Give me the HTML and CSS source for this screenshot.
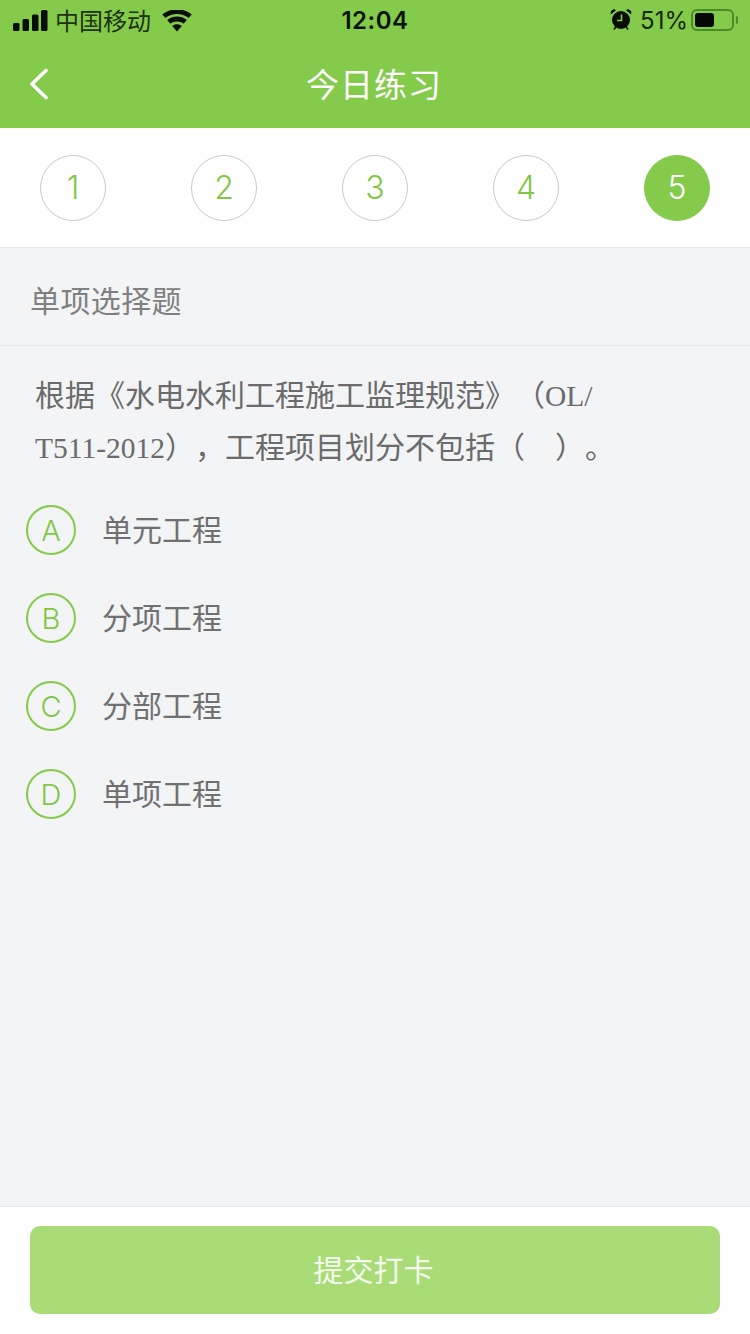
FILE: index.html
```html
<!DOCTYPE html>
<html lang="zh-CN">
<head>
    <meta charset="UTF-8">
    <meta name="viewport" content="width=device-width, initial-scale=1.0">
    <title>今日练习</title>
    <link rel="stylesheet" href="styles.css">
</head>
<body>
    <header class="top">
        <div class="status-bar">
            <div class="status-left">
                <svg class="signal" width="35" height="21" viewBox="0 0 35 21">
                    <rect x="0" y="13" width="6.500" height="8" rx="1.500"/>
                    <rect x="9.500" y="9" width="6.500" height="12" rx="1.500"/>
                    <rect x="19" y="4.500" width="6.500" height="16.500" rx="1.500"/>
                    <rect x="28" y="0" width="6.500" height="21" rx="1.500"/>
                </svg>
                <span class="carrier">中国移动</span>
                <svg class="wifi" width="30" height="22" viewBox="0 0 30 22">
                    <path d="M15 21.500l-4.800-5.600c2.800-2.200 6.800-2.200 9.600 0z"/>
                    <path d="M8.300 13.700L5.200 10c5.600-4.600 14-4.600 19.600 0l-3.100 3.700c-3.800-3-9.600-3-13.400 0z"/>
                    <path d="M3.400 8L.3 4.400C8.600-2.400 21.400-2.400 29.700 4.400L26.600 8C19.900 2.600 10.100 2.600 3.400 8z"/>
                </svg>
            </div>
            <div class="clock">12:04</div>
            <div class="status-right">
                <svg class="alarm" width="22" height="22" viewBox="0 0 22 22">
                    <circle cx="11" cy="12" r="9"/>
                    <path d="M.8 6.500L6 2.300 3.800 1 .8 3.300zM21.200 6.500L16 2.300 18.200 1 21.200 3.300z"/>
                    <path d="M4 21.500l2-3M18 21.500l-2-3" class="alarm-feet"/>
                    <path d="M11.500 6.500v6H7" class="alarm-hands"/>
                </svg>
                <span class="battery-text">51%</span>
                <div class="battery">
                    <div class="battery-level"></div>
                </div>
                <div class="battery-tip"></div>
            </div>
        </div>
        <div class="nav-bar">
            <svg class="back" width="20" height="32" viewBox="0 0 20 32">
                <path d="M17 2.500L3 16l14 13.500"/>
            </svg>
            <h1 class="nav-title">今日练习</h1>
        </div>
    </header>

    <div class="steps">
        <div class="step">1</div>
        <div class="step">2</div>
        <div class="step">3</div>
        <div class="step">4</div>
        <div class="step step-active">5</div>
    </div>

    <main class="content">
        <div class="section-title">单项选择题</div>
        <p class="question">根据《水电水利工程施工监理规范》（<span class="latin">OL/</span><br><span class="latin">T511-2012</span>），工程项目划分不包括（&nbsp;&nbsp;&nbsp;&nbsp;）。</p>
        <ul class="options">
            <li class="option"><span class="option-key">A</span><span class="option-text">单元工程</span></li>
            <li class="option"><span class="option-key">B</span><span class="option-text">分项工程</span></li>
            <li class="option"><span class="option-key">C</span><span class="option-text">分部工程</span></li>
            <li class="option"><span class="option-key">D</span><span class="option-text">单项工程</span></li>
        </ul>
    </main>

    <footer class="bottom">
        <button class="submit-button" type="button">提交打卡</button>
    </footer>
</body>
</html>
```

FILE: styles.css
```css
* {
    margin: 0;
    padding: 0;
    box-sizing: border-box;
}

html, body {
    height: 1334px;
    overflow: hidden;
}

body {
    display: flex;
    flex-direction: column;
    background-color: #f2f4f6;
    font-family: "Liberation Sans", "Noto Sans CJK SC", sans-serif;
}

/* top green area */
.top {
    height: 128px;
    background-color: #85cb4b;
    flex-shrink: 0;
}

.status-bar {
    height: 40px;
    display: flex;
    align-items: center;
    justify-content: space-between;
    padding: 0 13px;
    position: relative;
}

.status-left {
    display: flex;
    align-items: center;
}

.signal {
    fill: #0a0f06;
}

.carrier {
    font-size: 24px;
    margin-left: 7px;
    margin-top: -2px;
    color: #1c3210;
}

.wifi {
    fill: #0a0f06;
    margin-left: 11px;
    margin-top: 1px;
}

.clock {
    position: absolute;
    left: 0;
    right: 0;
    text-align: center;
    font-family: Inter, "Liberation Sans", sans-serif;
    font-size: 24px;
    font-weight: 600;
    letter-spacing: 0.5px;
    color: #0a1204;
}

.status-right {
    display: flex;
    align-items: center;
    margin-right: -1px;
}

.alarm {
    fill: #0a0f06;
    margin-right: 8px;
    margin-top: -2px;
}

.alarm-feet {
    stroke: #0a0f06;
    stroke-width: 1.500;
    fill: none;
}

.alarm-hands {
    stroke: #85cb4b;
    stroke-width: 1.600;
    fill: none;
}

.battery-text {
    font-family: Inter, "Liberation Sans", sans-serif;
    font-size: 24px;
    color: #14280a;
    margin-right: 3px;
}

.battery {
    width: 43px;
    height: 22px;
    border: 2px solid #4d8a28;
    border-radius: 6px;
    padding: 2px;
}

.battery-level {
    width: 19px;
    height: 100%;
    background-color: #050805;
    border-radius: 3px;
}

.battery-tip {
    width: 2px;
    height: 8px;
    margin-left: 2px;
    background-color: #4d8a28;
    border-radius: 0 2px 2px 0;
}

.nav-bar {
    height: 88px;
    position: relative;
    display: flex;
    align-items: center;
    justify-content: center;
}

.back {
    position: absolute;
    left: 29px;
    top: 28px;
    fill: none;
    stroke: #ffffff;
    stroke-width: 3.600;
    stroke-linecap: round;
    stroke-linejoin: round;
}

.nav-title {
    font-size: 33px;
    font-weight: normal;
    color: #ffffff;
    margin-top: -3px;
    margin-right: 2px;
    letter-spacing: 1px;
}

/* numbered question strip */
.steps {
    height: 120px;
    flex-shrink: 0;
    display: flex;
    align-items: center;
    justify-content: space-between;
    padding: 0 40px;
    background-color: #ffffff;
    border-bottom: 1px solid #e6e7e9;
}

.step {
    width: 66px;
    height: 66px;
    display: flex;
    align-items: center;
    justify-content: center;
    border: 1px solid #c9c9c9;
    border-radius: 50%;
    font-family: Inter, "Liberation Sans", sans-serif;
    font-size: 32px;
    font-weight: 300;
    color: #7fc745;
}

.step-active {
    background-color: #85cb4b;
    border-color: #85cb4b;
    color: #ffffff;
}

.content {
    flex: 1;
}

.section-title {
    height: 98px;
    padding: 4px 0 0 30px;
    display: flex;
    align-items: center;
    font-size: 30px;
    letter-spacing: 0.400px;
    color: #808080;
    border-bottom: 1px solid #e6e7e9;
}

.question {
    padding: 24px 35px 0;
    font-family: "Liberation Serif", "Noto Sans CJK SC", serif;
    font-size: 30px;
    line-height: 52px;
    color: #6b6b6b;
    text-spacing-trim: space-all;
}

.latin {
    font-size: 29.500px;
}

.options {
    list-style: none;
    padding: 12px 0 0 26px;
}

.option {
    height: 88px;
    display: flex;
    align-items: center;
}

.option-key {
    width: 50px;
    height: 50px;
    display: flex;
    align-items: center;
    justify-content: center;
    border: 2px solid #85cb4b;
    border-radius: 50%;
    font-family: Inter, "Liberation Sans", sans-serif;
    font-size: 29px;
    font-weight: 300;
    color: #7fc745;
}

.option-text {
    margin-left: 26px;
    margin-top: -4px;
    font-size: 30px;
    color: #707070;
}

/* submit bar */
.bottom {
    height: 128px;
    flex-shrink: 0;
    padding: 19px 30px 0;
    background-color: #ffffff;
    border-top: 1px solid #e6e7e9;
}

.submit-button {
    display: block;
    width: 100%;
    height: 88px;
    padding-bottom: 4px;
    padding-right: 3px;
    background-color: #a9dc77;
    color: #f4fbee;
    border: none;
    border-radius: 10px;
    font-size: 30px;
    font-family: "Noto Sans CJK SC", sans-serif;
}
```
